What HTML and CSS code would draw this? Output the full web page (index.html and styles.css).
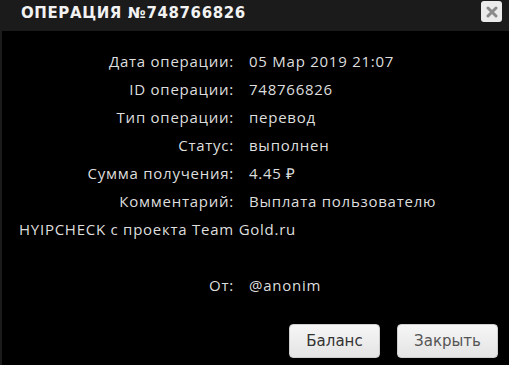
FILE: index.html
```html
<!DOCTYPE html>
<html lang="ru">
<head>
<meta charset="utf-8">
<link rel="stylesheet" href="styles.css">
</head>
<body>
<div class="dialog">
  <div class="header">
    <div class="title">ОПЕРАЦИЯ №748766826</div>
    <button class="close" aria-label="Закрыть">
      <svg width="12" height="12" viewBox="0 0 12 12"><path d="M2 2 L10 10 M10 2 L2 10" stroke="#8a8a8a" stroke-width="3" stroke-linecap="round"/></svg>
    </button>
  </div>
  <div class="content">
    <div class="row"><span class="label">Дата операции:</span><span class="value">05 Мар 2019 21:07</span></div>
    <div class="row"><span class="label">ID операции:</span><span class="value">748766826</span></div>
    <div class="row"><span class="label">Тип операции:</span><span class="value">перевод</span></div>
    <div class="row"><span class="label">Статус:</span><span class="value">выполнен</span></div>
    <div class="row"><span class="label">Сумма получения:</span><span class="value">4.45 ₽</span></div>
    <div class="row"><span class="label">Комментарий:</span><span class="value">Выплата пользователю<br>HYIPCHECK с проекта Team Gold.ru</span></div>
    <div class="row empty"></div>
    <div class="row"><span class="label">От:</span><span class="value">@anonim</span></div>
  </div>
  <div class="buttons">
    <button class="btn dark">Баланс</button>
    <button class="btn light">Закрыть</button>
  </div>
</div>
</body>
</html>
```
FILE: styles.css
```css
html, body {
  margin: 0;
  padding: 0;
  background: #000;
}
.dialog {
  width: 509px;
  height: 365px;
  background: #000;
  border-left: 2px solid #1b1b1b;
  box-sizing: border-box;
  display: flex;
  flex-direction: column;
}
.header {
  height: 31px;
  background: #1b1b1b;
  display: flex;
  align-items: flex-start;
  justify-content: space-between;
  padding: 0 7px 0 19px;
  margin-left: -2px;
}
.title {
  font-family: "DejaVu Sans", sans-serif;
  font-weight: bold;
  font-size: 15px;
  letter-spacing: 0.6px;
  color: #f2f2f2;
  line-height: 26px;
  padding-left: 2px;
}
.close {
  margin-top: 1px;
  width: 21px;
  height: 21px;
  border: none;
  border-radius: 3px;
  background: #ebebeb;
  padding: 0;
  display: flex;
  align-items: center;
  justify-content: center;
}
.content {
  padding: 16px 0 0 17px;
  font-family: "Open Sans", sans-serif;
  font-size: 15px;
  letter-spacing: 0.75px;
  color: #dedede;
  line-height: 28px;
}
.row {
  min-height: 28px;
}
.label {
  display: inline-block;
  width: 215px;
  text-align: right;
  margin-right: 15px;
}
.buttons {
  display: flex;
  justify-content: flex-end;
  gap: 17px;
  padding: 0 11px 0 0;
  margin-top: auto;
  margin-bottom: 7px;
}
.btn {
  height: 34px;
  border: 1px solid #cfcfcf;
  border-radius: 4px;
  background: linear-gradient(#f6f6f6, #e4e4e4);
  font-family: "DejaVu Sans", sans-serif;
  font-size: 15px;
  padding: 0;
}
.btn.dark {
  width: 91px;
  color: #333;
}
.btn.light {
  width: 101px;
  color: #555;
}
```
